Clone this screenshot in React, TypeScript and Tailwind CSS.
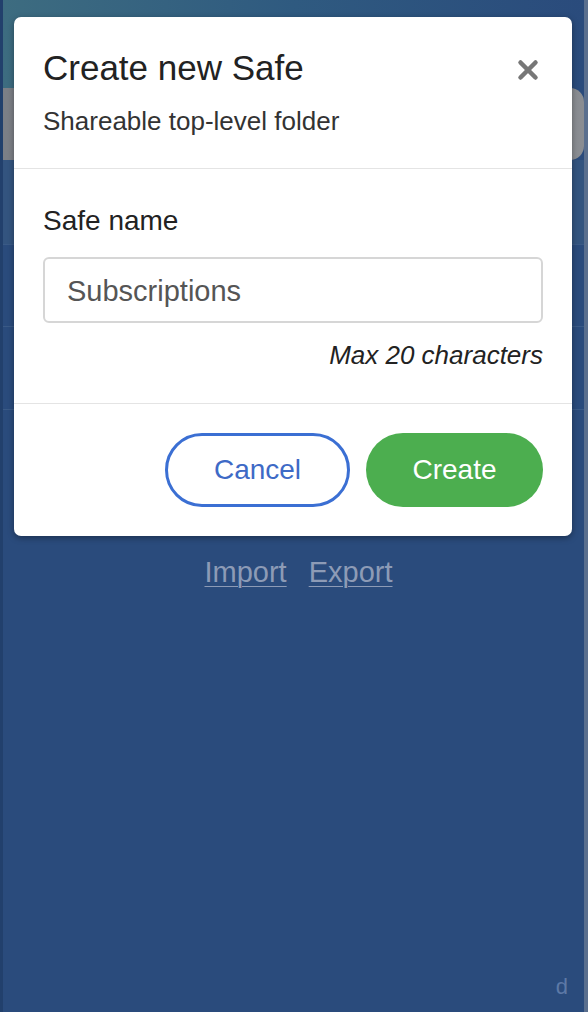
import { X } from 'lucide-react';

const font = { fontFamily: '"Liberation Sans", Arial, sans-serif' };

export default function App() {
  return (
    <div className="relative h-[1012px] w-[588px] overflow-hidden bg-[#2a4b7c]" style={font}>
      {/* page behind the dialog */}
      <div className="flex h-full flex-col border-l-[3px] border-r-[4px] border-l-[#22406c] border-r-[#5a6f8e]">
        <div className="h-[88px] bg-gradient-to-r from-[#3d6c80] via-[#2f5a80] to-[#2a4b7c]" />
        <div className="h-[72px] rounded-r-[14px] bg-gradient-to-r from-[#7c7f86] to-[#8a8d92]" />
        <div className="h-[85px] border-b border-[#3a5a86] bg-[#33547f]" />
        <div className="h-[82px] border-b border-[#3a5a86]" />
        <div className="h-[83px] border-b border-[#3a5a86]" />
        <div className="flex justify-center gap-[22px] pl-[10px] pt-[148px] text-[29px] leading-none text-[#8d9bb6]">
          <span className="underline decoration-1 underline-offset-4">Import</span>
          <span className="underline decoration-1 underline-offset-4">Export</span>
        </div>
        <div className="flex-1" />
        <div className="flex justify-end pb-[14px] pr-[16px] text-[22px] leading-none text-[#5d79a6]">d</div>
      </div>

      {/* dialog */}
      <div className="absolute left-[14px] top-[17px] w-[558px] rounded-[7px] bg-white shadow-[0_2px_6px_rgba(0,0,0,0.35)]">
        <div className="relative h-[152px] border-b border-[#e4e4e4] px-[29px] pt-[33px]">
          <h1 className="text-[35px] leading-[36px] text-[#222]">Create new Safe</h1>
          <p className="mt-[20px] text-[26px] leading-[30px] text-[#333]">Shareable top-level folder</p>
          <X className="absolute right-[29px] top-[38px] h-[30px] w-[30px] text-[#777]" strokeWidth={3.6} />
        </div>
        <div className="h-[235px] border-b border-[#e4e4e4] px-[29px] pt-[36px]">
          <label className="block text-[28px] leading-[32px] text-[#222]">Safe name</label>
          <div className="mt-[20px] flex h-[66px] items-center rounded-[6px] border-2 border-[#d6d6d6] px-[22px] pt-[3px] text-[29px] text-[#555]">
            Subscriptions
          </div>
          <p className="mt-[17px] text-right text-[26px] italic leading-[30px] text-[#222]">Max 20 characters</p>
        </div>
        <div className="flex h-[132px] items-start justify-end gap-[16px] px-[29px] pt-[29px]">
          <button className="flex h-[74px] w-[185px] items-center justify-center rounded-full border-[3px] border-[#3b6fd3] text-[28px] text-[#3e6ac6]">
            Cancel
          </button>
          <button className="flex h-[74px] w-[177px] items-center justify-center rounded-full bg-[#4cae4f] text-[28px] text-white">
            Create
          </button>
        </div>
      </div>
    </div>
  );
}
